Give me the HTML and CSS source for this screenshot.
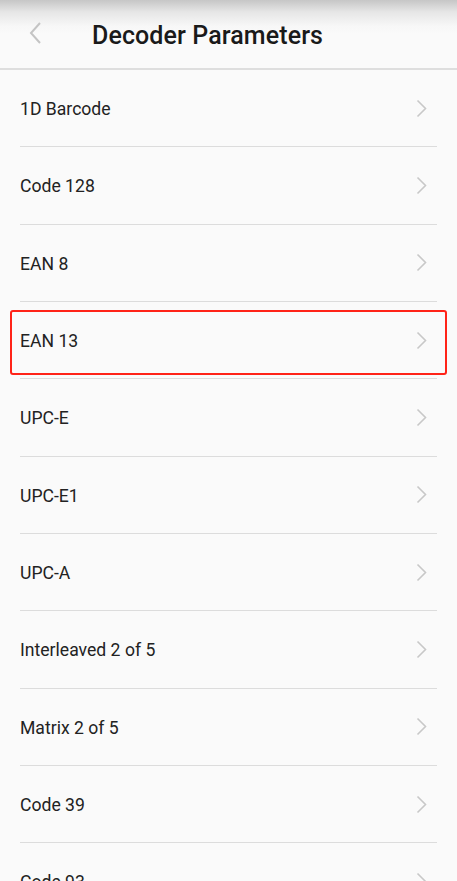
FILE: index.html
```html
<!DOCTYPE html>
<html>
<head>
<meta charset="utf-8">
<link rel="stylesheet" href="styles.css">
</head>
<body>
<header class="topbar">
  <svg class="back" width="14" height="22" viewBox="0 0 14 22"><path d="M11 1 L2 11 L11 21" fill="none" stroke="#c4c4c4" stroke-width="2"/></svg>
  <h1 class="title">Decoder Parameters</h1>
</header>
<ul class="list">
  <li class="row"><span>1D Barcode</span><svg class="chev" width="11" height="19" viewBox="0 0 11 19"><path d="M1.5 1.5 L9.5 9.5 L1.5 17.5" fill="none" stroke="#c8c8c8" stroke-width="1.6"/></svg></li>
  <li class="row"><span>Code 128</span><svg class="chev" width="11" height="19" viewBox="0 0 11 19"><path d="M1.5 1.5 L9.5 9.5 L1.5 17.5" fill="none" stroke="#c8c8c8" stroke-width="1.6"/></svg></li>
  <li class="row"><span>EAN 8</span><svg class="chev" width="11" height="19" viewBox="0 0 11 19"><path d="M1.5 1.5 L9.5 9.5 L1.5 17.5" fill="none" stroke="#c8c8c8" stroke-width="1.6"/></svg></li>
  <li class="row highlighted"><span>EAN 13</span><svg class="chev" width="11" height="19" viewBox="0 0 11 19"><path d="M1.5 1.5 L9.5 9.5 L1.5 17.5" fill="none" stroke="#c8c8c8" stroke-width="1.6"/></svg></li>
  <li class="row"><span>UPC-E</span><svg class="chev" width="11" height="19" viewBox="0 0 11 19"><path d="M1.5 1.5 L9.5 9.5 L1.5 17.5" fill="none" stroke="#c8c8c8" stroke-width="1.6"/></svg></li>
  <li class="row"><span>UPC-E1</span><svg class="chev" width="11" height="19" viewBox="0 0 11 19"><path d="M1.5 1.5 L9.5 9.5 L1.5 17.5" fill="none" stroke="#c8c8c8" stroke-width="1.6"/></svg></li>
  <li class="row"><span>UPC-A</span><svg class="chev" width="11" height="19" viewBox="0 0 11 19"><path d="M1.5 1.5 L9.5 9.5 L1.5 17.5" fill="none" stroke="#c8c8c8" stroke-width="1.6"/></svg></li>
  <li class="row"><span>Interleaved 2 of 5</span><svg class="chev" width="11" height="19" viewBox="0 0 11 19"><path d="M1.5 1.5 L9.5 9.5 L1.5 17.5" fill="none" stroke="#c8c8c8" stroke-width="1.6"/></svg></li>
  <li class="row"><span>Matrix 2 of 5</span><svg class="chev" width="11" height="19" viewBox="0 0 11 19"><path d="M1.5 1.5 L9.5 9.5 L1.5 17.5" fill="none" stroke="#c8c8c8" stroke-width="1.6"/></svg></li>
  <li class="row"><span>Code 39</span><svg class="chev" width="11" height="19" viewBox="0 0 11 19"><path d="M1.5 1.5 L9.5 9.5 L1.5 17.5" fill="none" stroke="#c8c8c8" stroke-width="1.6"/></svg></li>
  <li class="row"><span>Code 93</span><svg class="chev" width="11" height="19" viewBox="0 0 11 19"><path d="M1.5 1.5 L9.5 9.5 L1.5 17.5" fill="none" stroke="#c8c8c8" stroke-width="1.6"/></svg></li>
</ul>
</body>
</html>
```
FILE: styles.css
```css
html, body {
  margin: 0;
  padding: 0;
  background: #fafafa;
  font-family: Roboto, "Liberation Sans", sans-serif;
  overflow: hidden;
}
.topbar {
  height: 68px;
  border-bottom: 2px solid #dedede;
  background: linear-gradient(to bottom, #c6c6c6 0px, #e6e6e6 12px, #f7f7f7 26px, #fafafa 34px);
  display: flex;
  align-items: center;
  box-sizing: content-box;
}
.back {
  margin-left: 29px;
  margin-top: -2px;
  flex: none;
}
.title {
  margin: 2px 0 0 49px;
  font-size: 25px;
  font-weight: 500;
  color: #1a1a1a;
  letter-spacing: 0.1px;
}
.list {
  list-style: none;
  margin: 0;
  padding: 0 20px;
}
.row {
  height: 77.33px;
  box-sizing: border-box;
  border-bottom: 1px solid #dcdcdc;
  display: flex;
  align-items: center;
  justify-content: space-between;
  font-size: 17.6px;
  color: #222;
  position: relative;
}
.row span {
  padding-top: 2px;
}
.chev {
  margin-right: 10px;
  flex: none;
}
.highlighted::after {
  content: "";
  position: absolute;
  left: -10px;
  right: -10px;
  top: 8px;
  bottom: 3px;
  border: 2.5px solid #ff2318;
  border-radius: 3px;
}
```
